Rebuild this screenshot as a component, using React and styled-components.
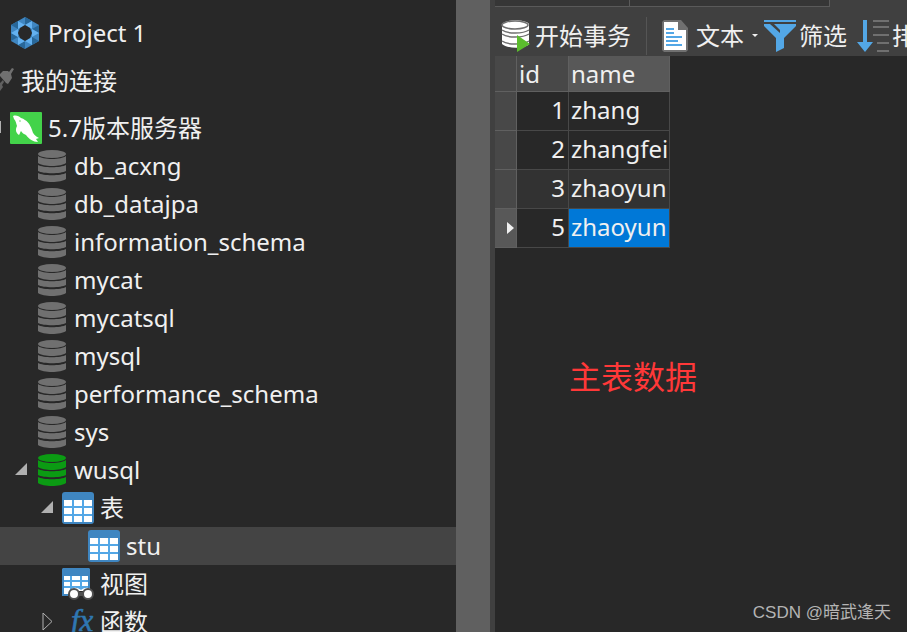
import React, { useState } from "react";
import styled, { createGlobalStyle } from "styled-components";

const GlobalStyle = createGlobalStyle`
    * {
        box-sizing: border-box;
    }
    body {
        margin: 0;
        overflow: hidden;
        background: #282828;
        color: #f0f0f0;
        font-family: "Noto Sans", "Noto Sans CJK SC", sans-serif;
        font-size: 24px;
        line-height: 38px;
    }
    button {
        padding: 0;
        border: 0;
        background: none;
        color: inherit;
        font: inherit;
    }
    svg {
        display: block;
        flex: none;
    }
`;

const Window = styled.div`
    display: flex;
    height: 100vh;
    overflow: hidden;
`;

/* ---------- left side: connection tree ---------- */

const Sidebar = styled.nav`
    flex: none;
    width: 456px;
    padding-top: 9px;
    overflow: hidden;
`;

const ProjectRow = styled.div`
    display: flex;
    align-items: center;
    gap: 6px;
    height: 48px;
    padding-left: 10px;
`;

const ConnectionRow = styled.div`
    display: flex;
    align-items: center;
    gap: 6px;
    height: 48px;
    margin-bottom: 4px;
`;

const Tree = styled.ul`
    margin: 0;
    padding: 0;
    list-style: none;
`;

const TreeRow = styled.li`
    display: flex;
    align-items: center;
    height: 38px;
    padding-left: ${({ $level }) => ($level ? $level * 26 - 16 : 0)}px;
    background: ${({ $selected }) => ($selected ? "#444444" : "transparent")};
    white-space: nowrap;
`;

const ToggleSlot = styled.span`
    display: flex;
    flex: none;
    width: ${({ $level }) => ($level ? 26 : 10)}px;
    padding-left: ${({ $level }) => ($level ? 4 : 0)}px;
`;

const IconSlot = styled.span`
    flex: none;
    width: 32px;
    margin-right: 6px;
`;

const Splitter = styled.div`
    flex: none;
    width: 39px;
    border-right: 5px solid #404040;
    background: #606060;
`;

/* ---------- right side: data view ---------- */

const Main = styled.main`
    display: flex;
    flex: 1;
    flex-direction: column;
    align-items: flex-start;
    min-width: 0;
    overflow: hidden;
`;

const TabStrip = styled.div`
    display: flex;
    width: 100%;
    height: 7px;
    background: #404040;
`;

const TabEdge = styled.div`
    width: ${({ $width }) => $width}px;
    border-right: 1px solid #5a5a5a;
    border-bottom: 1px solid #5a5a5a;
    background: #363636;
`;

const Toolbar = styled.div`
    display: flex;
    align-items: center;
    width: 100%;
    height: 49px;
    padding: 8px 0 0 5px;
    overflow: hidden;
    background: #404040;
`;

const ToolButton = styled.button`
    display: flex;
    flex: none;
    align-items: center;
    gap: ${({ $gap }) => $gap || 3}px;
    margin-right: ${({ $after }) => $after || 0}px;
    white-space: nowrap;
`;

const Separator = styled.span`
    flex: none;
    width: 1px;
    height: 38px;
    margin-right: 15px;
    background: #555555;
`;

const Grid = styled.table`
    flex: none;
    width: 175px;
    table-layout: fixed;
    border-spacing: 0;
`;

const HeadCell = styled.th`
    width: ${({ $width }) => $width}px;
    height: 36px;
    padding: 0 0 0 2px;
    border-right: 1px solid #606060;
    border-bottom: 1px solid #606060;
    background: ${({ $current }) => ($current ? "#585858" : "#484848")};
    font-weight: 400;
    line-height: 35px;
    text-align: left;
`;

const Gutter = styled.td`
    height: 39px;
    padding: 0 0 0 12px;
    border-right: 1px solid #606060;
    border-bottom: 1px solid #606060;
    background: ${({ $current }) => ($current ? "#585858" : "#484848")};
`;

const Cell = styled.td`
    height: 39px;
    padding: ${({ $number }) => ($number ? "0 3px 2px 0" : "0 0 2px 2px")};
    overflow: hidden;
    border-right: 1px solid #484848;
    border-bottom: 1px solid #484848;
    background: ${({ $current, $odd }) => ($current ? "#0078d7" : $odd ? "#323232" : "#282828")};
    line-height: 36px;
    text-align: ${({ $number }) => ($number ? "right" : "left")};
    white-space: nowrap;
`;

const Note = styled.p`
    margin: 105px 0 0 74px;
    color: #ff3838;
    font-size: 32px;
    line-height: 48px;
`;

const Watermark = styled.p`
    align-self: flex-end;
    margin: auto 16px 6px 0;
    color: #b4b4b4;
    font-family: "Liberation Sans", "Noto Sans CJK SC", sans-serif;
    font-size: 17px;
    line-height: 26px;
`;

/* ---------- icons ---------- */

const ProjectIcon = () => (
    <svg width="32" height="32" viewBox="0 0 32 32">
        <path d="M15 0 29 8V24L15 32 1 24V8Z" fill="#3f86c1" />
        <path d="M15 0 22 4 15 8ZM29 8V16L22 12ZM29 24 22 28V20ZM15 32 8 28 15 24ZM1 24V16L8 20ZM1 8 8 4V12Z" fill="#286799" />
        <path d="m8 4 7 4-7 4ZM22 4v8l-7-4ZM29 16l-7 4v-8ZM1 16l7 4v-8ZM8 28v-8l7 4ZM22 28v-8l-7 4Z" fill="#63b1f0" />
        <path d="M15 8 20 11 22 16 20 21 15 24 10 21 8 16 10 11Z" fill="#282828" />
    </svg>
);

const PlugIcon = () => (
    <svg width="15" height="28" viewBox="0 0 15 28">
        <path d="M0 7 3 4 8 4 9 5 12 1 14 2 11 7 12 11 8 17 6 16 0 9Z" fill="#707070" />
        <path d="M0 16 3 13 4 15 2 18 3 20 0 24V21Z" fill="#606060" />
    </svg>
);

const ServerIcon = () => (
    <svg width="32" height="32" viewBox="0 0 32 32">
        <rect width="32" height="32" rx="1" fill="#43d34a" />
        <path
            d="M3 4C6 3 9 4 11 6c6 2 9 6 11 12 1 4 3 6 7 8l-3 1 2 3c-5 0-9-3-12-7-2-1-4-2-5-4-1 1-1 3-2 4-3-2-4-5-2-9-1-3-1-5-3-7Z"
            fill="#fff"
        />
        <circle cx="10" cy="9" r="0.7" fill="#43d34a" />
    </svg>
);

const DatabaseIcon = ({ color = "#707070" }) => (
    <svg width="32" height="32" viewBox="0 0 32 32" fill={color}>
        <ellipse cx="16" cy="4" rx="14" ry="4" />
        <path d="M2 6C7 10 25 10 30 6V13C25 17 7 17 2 13Z" />
        <path d="M2 15C7 18 25 18 30 15V21C25 24 7 24 2 21Z" />
        <path d="M2 23C7 26 25 26 30 23V29C25 33 7 33 2 29Z" />
    </svg>
);

const TableIcon = () => (
    <svg width="32" height="32" viewBox="0 0 32 32">
        <rect width="32" height="32" rx="3" fill="#3f86c1" />
        <path d="M2 8h28v22H2Z" fill="#53a7e6" />
        <path d="M2 8h8v6H2zM12 8h8v6h-8zM22 8h8v6h-8zM2 16h8v6H2zM12 16h8v6h-8zM22 16h8v6h-8zM2 24h8v6H2zM12 24h8v6h-8zM22 24h8v6h-8z" fill="#fff" />
    </svg>
);

const ViewIcon = () => (
    <svg width="32" height="32" viewBox="0 0 32 32">
        <path d="M1 0h26l1 1v21H6v6H0V1Z" fill="#3f86c1" />
        <path d="M2 8h24v14H2Z" fill="#53a7e6" />
        <path d="M2 8h6v4H2zM10 8h8v4h-8zM20 8h6v4h-6zM2 14h6v4H2zM10 14h8v4h-8zM20 14h6v4h-6zM2 20h6v6H2z" fill="#fff" />
        <path d="M8 23c2-4 7-4 11-1 4-3 9-3 11 1" fill="#fff" />
        <path d="M15 26h8" stroke="#505050" strokeWidth="4" />
        <circle cx="12" cy="26" r="5" fill="#fff" stroke="#505050" strokeWidth="2" />
        <circle cx="26" cy="26" r="5" fill="#fff" stroke="#505050" strokeWidth="2" />
    </svg>
);

const FunctionIcon = () => (
    <svg width="32" height="32" viewBox="0 0 32 32" aria-hidden="true">
        <text
            x="9"
            y="25"
            fill="#2f77b2"
            stroke="#2f77b2"
            strokeWidth="0.6"
            fontFamily="Liberation Serif, serif"
            fontSize="31"
            fontStyle="italic"
        >
            fx
        </text>
    </svg>
);

const TransactionIcon = () => (
    <svg width="32" height="32" viewBox="0 0 32 32">
        <path d="M2 4v20c5 5 23 5 27 0V4C25-1 6-1 2 4Z" fill="#fff" />
        <ellipse cx="15" cy="5" rx="13" ry="4" fill="#fff" stroke="#707070" strokeWidth="1.5" />
        <path d="M2 10c5 4 21 4 27 0M2 14c5 4 21 4 27 0M2 21c5 4 21 4 27 0" fill="none" stroke="#707070" strokeWidth="1.5" />
        <path d="M17 15 30 24 17 32Z" fill="#5bbc2d" />
    </svg>
);

const TextIcon = () => (
    <svg width="26" height="32" viewBox="0 0 26 32">
        <path d="M2 0h17l7 8v22l-2 2H2L0 30V2Z" fill="#707070" />
        <path d="M2 2h14v8h8v20H2Z" fill="#fff" />
        <path d="M4 9h8M4 13h8M4 17h16M4 21h12M4 25h16" stroke="#53a7e6" strokeWidth="2" />
    </svg>
);

const FilterIcon = () => (
    <svg width="32" height="32" viewBox="0 0 32 32" fill="#53a7e6">
        <path d="M0 0h32v2H0ZM0 4h32v2L20 18v10l-8 4V18L0 6Z" />
        <path d="M6 4h4l6 6v3Z" fill="#404040" />
    </svg>
);

const SortIcon = () => (
    <svg width="32" height="32" viewBox="0 0 32 32">
        <path d="M6 0h4v22h6L8 32 0 22h6Z" fill="#53a7e6" />
        <path d="M16 1h16M16 7h16M16 15h16M20 23h12M20 31h12" stroke="#707070" strokeWidth="2" />
    </svg>
);

const DropMark = () => (
    <svg width="6" height="3" viewBox="0 0 6 3">
        <path d="M0 0h6L3 3Z" fill="#f0f0f0" />
    </svg>
);

const toggles = {
    open: <path d="M13 2v12H1Z" fill="#b0b0b0" />,
    closed: <path d="M3 0v17l9-8.500Z" fill="none" stroke="#b0b0b0" />,
    edge: <path d="M0 2h1v12H0Z" fill="#b0b0b0" />,
};

const icons = {
    server: <ServerIcon />,
    db: <DatabaseIcon />,
    activeDb: <DatabaseIcon color="#0b9b13" />,
    table: <TableIcon />,
    view: <ViewIcon />,
    fn: <FunctionIcon />,
};

const nodes = [
    { name: "5.7版本服务器", level: 0, icon: "server", toggle: "edge" },
    { name: "db_acxng", level: 1, icon: "db" },
    { name: "db_datajpa", level: 1, icon: "db" },
    { name: "information_schema", level: 1, icon: "db" },
    { name: "mycat", level: 1, icon: "db" },
    { name: "mycatsql", level: 1, icon: "db" },
    { name: "mysql", level: 1, icon: "db" },
    { name: "performance_schema", level: 1, icon: "db" },
    { name: "sys", level: 1, icon: "db" },
    { name: "wusql", level: 1, icon: "activeDb", toggle: "open" },
    { name: "表", level: 2, icon: "table", toggle: "open" },
    { name: "stu", level: 3, icon: "table" },
    { name: "视图", level: 2, icon: "view" },
    { name: "函数", level: 2, icon: "fn", toggle: "closed" },
];

const rows = [
    { id: 1, name: "zhang" },
    { id: 2, name: "zhangfei" },
    { id: 3, name: "zhaoyun" },
    { id: 5, name: "zhaoyun" },
];

const App = () => {
    const [selected, setSelected] = useState("stu");
    const [current, setCurrent] = useState(5);

    return (
        <>
            <GlobalStyle />
            <Window>
                <Sidebar>
                    <ProjectRow>
                        <ProjectIcon />
                        Project 1
                    </ProjectRow>
                    <ConnectionRow>
                        <PlugIcon />
                        我的连接
                    </ConnectionRow>
                    <Tree role="tree">
                        {nodes.map(({ name, level, icon, toggle }) => (
                            <TreeRow
                                key={name}
                                role="treeitem"
                                aria-level={level + 1}
                                aria-selected={selected === name}
                                $level={level}
                                $selected={selected === name}
                                onClick={() => setSelected(name)}
                            >
                                <ToggleSlot $level={level}>
                                    {toggle && (
                                        <button type="button" aria-label={"展开 " + name}>
                                            <svg width={level ? 16 : 10} height="18" viewBox={level ? "0 0 16 18" : "0 0 10 18"}>
                                                {toggles[toggle]}
                                            </svg>
                                        </button>
                                    )}
                                </ToggleSlot>
                                <IconSlot>{icons[icon]}</IconSlot>
                                {name}
                            </TreeRow>
                        ))}
                    </Tree>
                </Sidebar>
                <Splitter />
                <Main>
                    <TabStrip>
                        <TabEdge $width={135} />
                        <TabEdge $width={200} />
                    </TabStrip>
                    <Toolbar>
                        <ToolButton type="button" $after={15}>
                            <TransactionIcon />
                            开始事务
                        </ToolButton>
                        <Separator />
                        <ToolButton type="button" $gap={8} $after={6}>
                            <TextIcon />
                            文本
                            <DropMark />
                        </ToolButton>
                        <ToolButton type="button" $after={10}>
                            <FilterIcon />
                            筛选
                        </ToolButton>
                        <ToolButton type="button">
                            <SortIcon />
                            排序
                        </ToolButton>
                    </Toolbar>
                    <Grid>
                        <thead>
                            <tr>
                                <HeadCell $width={22} aria-label="当前行" />
                                <HeadCell $width={52}>id</HeadCell>
                                <HeadCell $width={101} $current>name</HeadCell>
                            </tr>
                        </thead>
                        <tbody>
                            {rows.map((row, i) => (
                                <tr key={row.id} onClick={() => setCurrent(row.id)}>
                                    <Gutter $current={current === row.id}>
                                        {current === row.id && (
                                            <svg width="7" height="12" viewBox="0 0 7 12">
                                                <path d="M0 0 7 6 0 12Z" fill="#f0f0f0" />
                                            </svg>
                                        )}
                                    </Gutter>
                                    <Cell $number $odd={i === 2}>{row.id}</Cell>
                                    <Cell $odd={i === 2} $current={current === row.id}>{row.name}</Cell>
                                </tr>
                            ))}
                        </tbody>
                    </Grid>
                    <Note>主表数据</Note>
                    <Watermark>CSDN @暗武逢天</Watermark>
                </Main>
            </Window>
        </>
    );
};

export default App;
